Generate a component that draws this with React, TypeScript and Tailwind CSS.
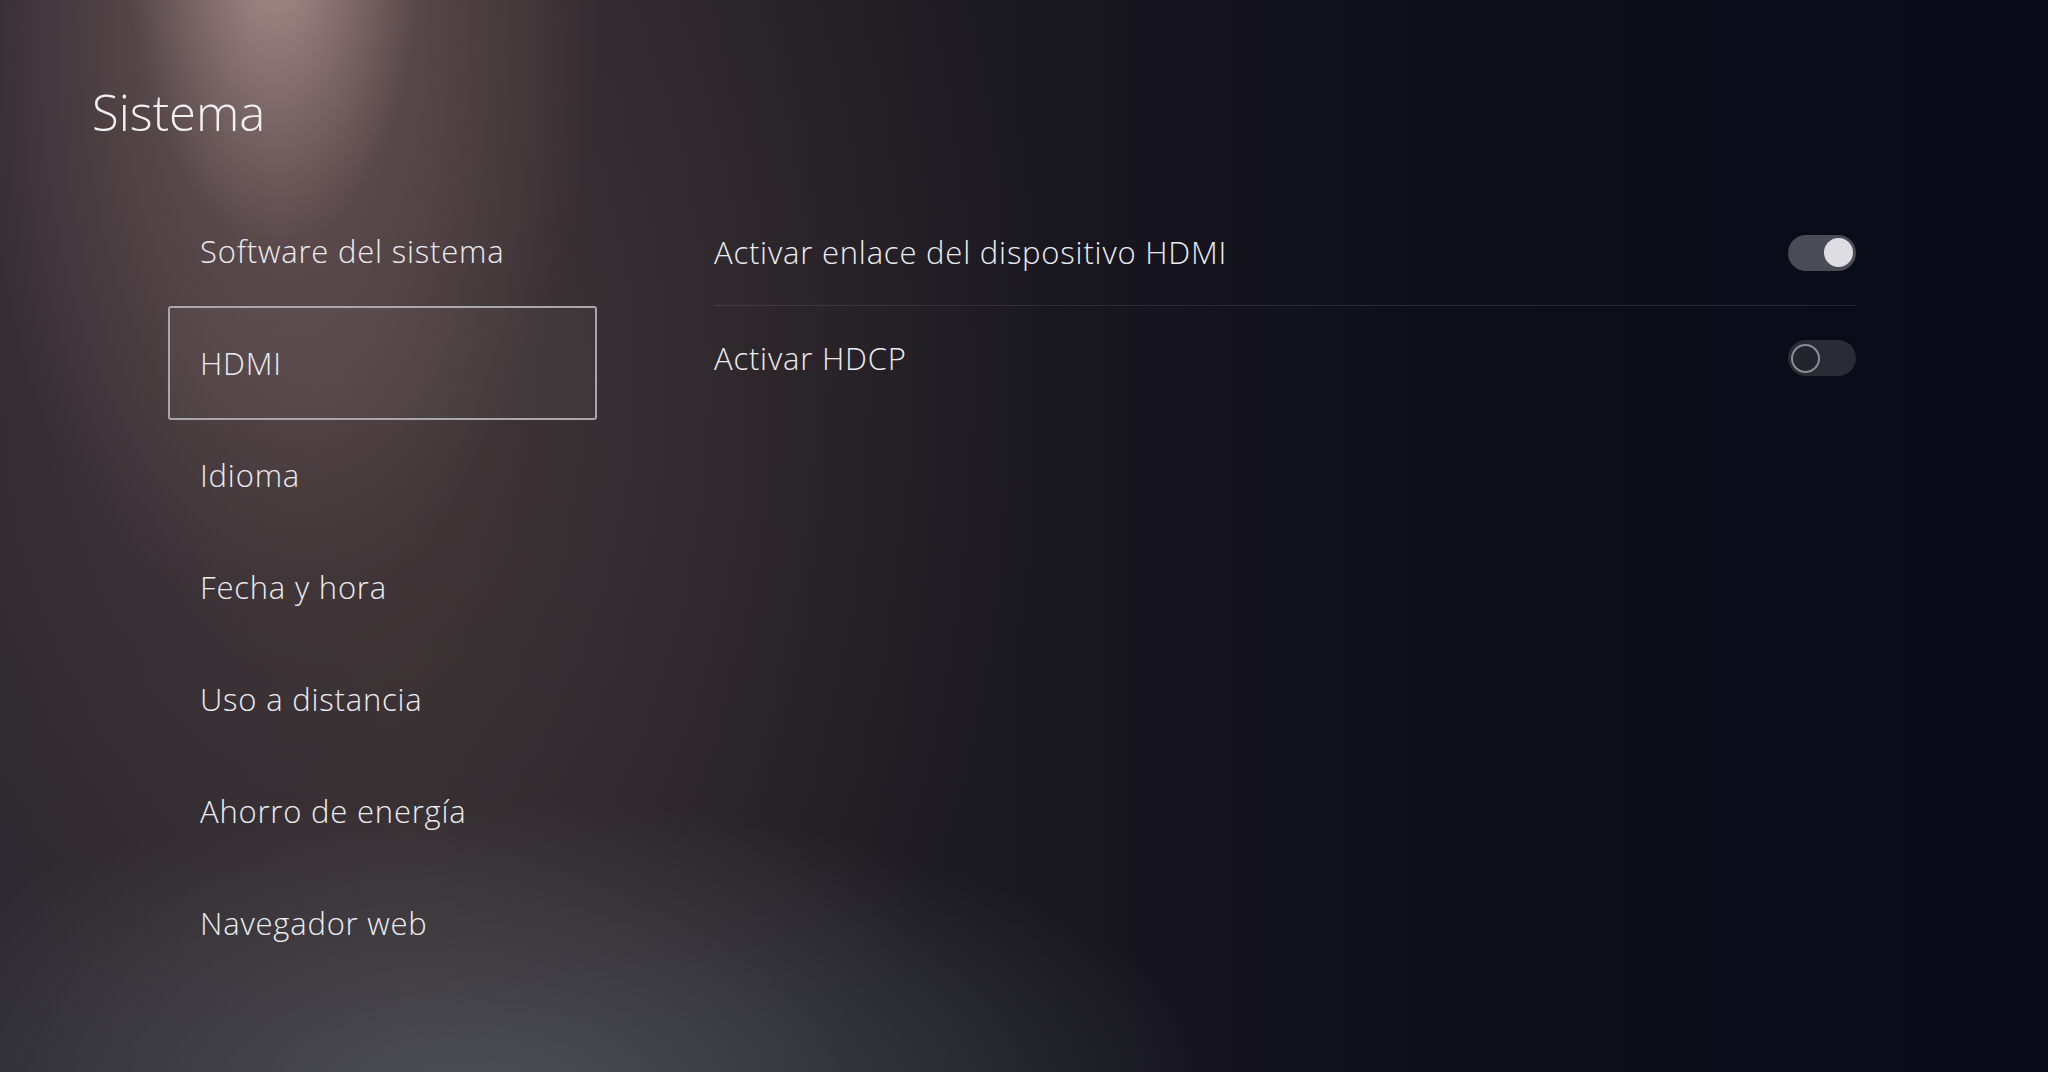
import { useState } from "react";

const menu = [
    "Software del sistema",
    "HDMI",
    "Idioma",
    "Fecha y hora",
    "Uso a distancia",
    "Ahorro de energía",
    "Navegador web",
];

function Toggle({ on }: { on: boolean }) {
    return (
        <div
            className={`w-[68px] h-[36px] rounded-full flex items-center px-[3px] ${on ? "bg-[#4a4b55] justify-end" : "bg-[#2a2c35] justify-start"}`}
        >
            {on ? (
                <div className="w-[29px] h-[29px] rounded-full bg-[#dedee2]" />
            ) : (
                <div className="w-[29px] h-[29px] rounded-full border-2 border-[#8c8c93] bg-[#23252d]" />
            )}
        </div>
    );
}

export default function App() {
    const [selected] = useState(1);

    return (
        <div className="w-full h-[1072px] overflow-hidden flex flex-col text-[#ececef] font-['Open_Sans','Liberation_Sans',sans-serif] font-light bg-[radial-gradient(ellipse_330px_680px_at_275px_-60px,rgba(210,178,172,0.75),rgba(140,110,110,0.35)_45%,rgba(0,0,0,0)_100%),radial-gradient(ellipse_720px_300px_at_500px_1100px,rgba(90,95,104,0.7),rgba(0,0,0,0)_100%),radial-gradient(ellipse_720px_950px_at_330px_380px,rgba(90,72,74,0.55),rgba(0,0,0,0)_100%),linear-gradient(to_right,#24222a_0%,#2a2629_20%,#1c1a21_45%,#0f0f1b_70%,#080a17_100%)]">
            {/* Title */}
            <div className="pt-[88px] pl-[92px] h-[137px]">
                <h1 className="text-[49px] leading-[49px] font-light text-[#f2f0f0]">Sistema</h1>
            </div>

            <div className="flex mt-[58px]">
                {/* Left menu */}
                <div className="pl-[168px] w-[597px] flex flex-col">
                    {menu.map((m, i) => (
                        <div
                            key={m}
                            className={`h-[112px] w-[429px] flex items-center pl-[30px] rounded-[3px] border-2 text-[31px] leading-none tracking-[0.8px] ${i === selected ? "border-[#a9a6ad] bg-[rgba(255,255,255,0.035)] h-[114px] -my-px" : "border-transparent"}`}
                        >
                            {m}
                        </div>
                    ))}
                </div>

                {/* Right settings */}
                <div className="ml-[117px] w-[1142px] mt-[5px] flex flex-col">
                    <div className="h-[105px] flex items-center justify-between">
                        <span className="text-[31px] leading-none tracking-[0.8px]">Activar enlace del dispositivo HDMI</span>
                        <Toggle on />
                    </div>
                    <div className="h-px bg-[rgba(255,255,255,0.1)]" />
                    <div className="h-[104px] flex items-center justify-between">
                        <span className="text-[31px] leading-none tracking-[0.8px]">Activar HDCP</span>
                        <Toggle on={false} />
                    </div>
                </div>
            </div>
        </div>
    );
}
